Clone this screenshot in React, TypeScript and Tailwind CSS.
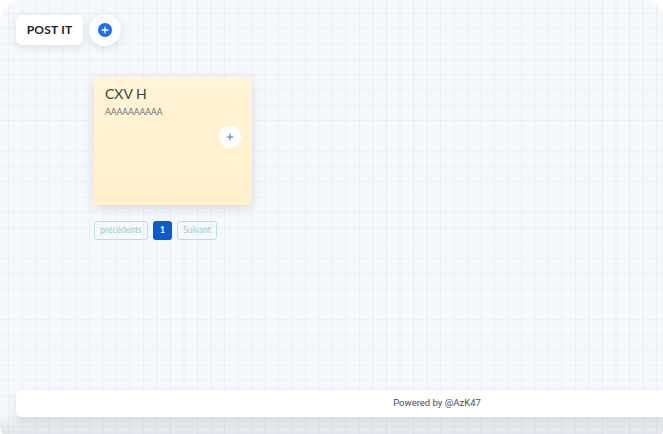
import { Plus } from 'lucide-react';

export default function App() {
    return (
        <div className="w-[663px] h-[434px] bg-white overflow-hidden font-['Lato','Noto_Sans',sans-serif]">
            <div className="relative w-[664px] h-[446px] rounded-[22px] overflow-hidden bg-[#f5f9fd] bg-[linear-gradient(to_right,#eaeff6_1px,transparent_1px),linear-gradient(to_bottom,#ecf1f7_1px,transparent_1px)] bg-[size:13.5px_15.3px] bg-[position:8px_13px] flex flex-col">
                {/* toolbar */}
                <div className="flex items-center gap-[6px] pl-4 pt-[14px]">
                    <button className="w-[67px] h-[30px] rounded-md bg-white shadow-[0_2px_8px_rgba(30,40,60,0.12)] text-[12px] font-bold text-[#1d1f22] tracking-[0.2px]">
                        POST IT
                    </button>
                    <button className="w-[32px] h-[32px] rounded-full bg-white shadow-[0_2px_8px_rgba(30,40,60,0.12)] flex items-center justify-center">
                        <span className="w-[14px] h-[14px] rounded-full bg-[#176ff2] flex items-center justify-center">
                            <Plus size={10} strokeWidth={3.2} color="#fff" />
                        </span>
                    </button>
                </div>

                {/* notes */}
                <div className="pl-[94px] pt-[31px]">
                    <div className="w-[158px] h-[128px] bg-[linear-gradient(to_bottom,#fff4d6,#fff1cc)] shadow-[0_3px_10px_rgba(60,60,60,0.16)] px-[11px] pt-[8px] flex flex-col">
                        <h2 className="text-[14px] leading-[18px] text-[#3b4147]">CXV H</h2>
                        <p className="mt-[3px] text-[8.5px] leading-[12px] text-[#6b6e72]">AAAAAAAAAA</p>
                        <div className="flex justify-end mt-[8px]">
                            <button className="w-[22px] h-[22px] rounded-full bg-white flex items-center justify-center">
                                <Plus size={10} strokeWidth={2.6} color="#2f7df0" />
                            </button>
                        </div>
                    </div>

                    <div className="flex items-center gap-[5px] mt-[16px]">
                        <button className="h-[19px] w-[54px] rounded-[3px] border border-[#bfe0da] text-[8.5px] text-[#9fcbc3]">
                            précédents
                        </button>
                        <button className="h-[19px] w-[19px] rounded-[3px] bg-[#0a5ccf] text-[8.5px] font-bold text-white">
                            1
                        </button>
                        <button className="h-[19px] w-[40px] rounded-[3px] border border-[#bfe0da] text-[8.5px] text-[#9fcbc3]">
                            Suivant
                        </button>
                    </div>
                </div>

                <div className="flex-1" />

                {/* footer */}
                <div className="relative pl-4 pb-[29px]">
                    <footer className="relative z-10 w-[842px] h-[27px] rounded-md bg-white shadow-[0_4px_10px_rgba(40,50,70,0.14)] flex items-center justify-center">
                        <span className="text-[9.5px] text-[#4a4d52] font-['Roboto',sans-serif]">Powered by @AzK47</span>
                    </footer>
                    <div className="absolute left-0 right-0 bottom-0 h-[30px] bg-[linear-gradient(to_bottom,rgba(160,168,180,0.05),rgba(150,156,168,0.32))]" />
                </div>
            </div>
        </div>
    );
}
